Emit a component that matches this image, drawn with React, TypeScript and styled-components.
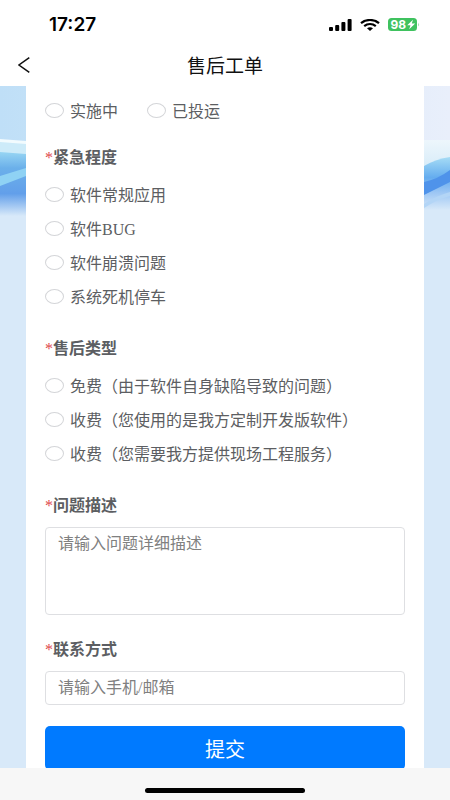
import React from "react";
import styled, { createGlobalStyle } from "styled-components";

const GlobalStyle = createGlobalStyle`
  *, *::before, *::after { box-sizing: border-box; }
  body { margin: 0; background: #fff; }
  button, input, textarea { font: inherit; }
`;

const Page = styled.div`
  display: flex;
  flex-direction: column;
  height: 100vh;
  background: #fff;
  color: #5c5e62;
  font-family: "Liberation Serif", "Noto Sans CJK SC", serif;
  font-size: 16px;
`;

const StatusBar = styled.div`
  display: flex;
  flex: none;
  align-items: center;
  justify-content: space-between;
  height: 48px;
  padding: 1px 30px 0 49px;
`;

const Clock = styled.time`
  color: #000;
  font: 600 19px/24px Inter, sans-serif;
`;

const StatusIcons = styled.div`
  display: flex;
  align-items: center;
  gap: 8px;
`;

const NavBar = styled.header`
  display: grid;
  flex: none;
  grid-template-columns: 48px 1fr 48px;
  align-items: center;
  height: 38px;
  padding-bottom: 4px;
`;

const BackButton = styled.button`
  display: flex;
  align-items: center;
  height: 34px;
  padding: 0 0 0 18px;
  border: 0;
  background: none;
  color: #111;
`;

const Title = styled.h1`
  margin: 0;
  color: #111;
  font: 400 19px/34px "Noto Sans CJK SC", sans-serif;
  text-align: center;
`;

const Content = styled.main`
  position: relative;
  flex: 1;
  min-height: 0;
  padding: 0 26px;
  overflow-y: auto;
  scrollbar-width: none;
  background: #d8e9f9;
`;

const Backdrop = styled.svg`
  position: absolute;
  top: 0;
  left: 0;
  width: 100%;
  height: 130px;
`;

const Card = styled.form`
  position: relative;
  padding: 7px 19px 19px;
  background: #fff;
`;

const Group = styled.fieldset<{ $gap: number }>`
  min-width: 0;
  margin: 0 0 ${(p) => p.$gap}px;
  padding: 0;
  border: 0;
`;

const GroupTitle = styled.legend`
  padding: 2px 0 4px;
  font-weight: 700;
  line-height: 30px;
`;

const Field = styled.div`
  display: flex;
  flex-direction: column;
  gap: 6px;
  margin-bottom: 20px;
`;

const FieldLabel = styled.label`
  font-weight: 700;
  line-height: 30px;
`;

const Required = styled.span`
  color: #e0474c;
  font-weight: 400;
`;

const Options = styled.div<{ $inline?: boolean }>`
  display: flex;
  flex-direction: ${(p) => (p.$inline ? "row" : "column")};
  column-gap: 29px;
`;

const Option = styled.label`
  display: flex;
  align-items: center;
  gap: 6px;
  height: 34px;
  white-space: nowrap;
`;

const Radio = styled.input`
  flex: none;
  width: 19px;
  height: 15px;
  margin: 0;
  border: 1px solid #d4d5d8;
  border-radius: 50%;
  appearance: none;
  background: #fff;
  &:checked { border: 5px solid #007aff; }
`;

const TextArea = styled.textarea`
  display: block;
  width: 100%;
  height: 88px;
  padding: 4px 12px;
  border: 1px solid #dedfe2;
  border-radius: 4px;
  outline: 0;
  resize: none;
  color: #5c5e62;
  line-height: 24px;
  &::placeholder { color: #808080; }
`;

const TextInput = styled.input`
  width: 100%;
  height: 34px;
  padding: 0 12px;
  border: 1px solid #dedfe2;
  border-radius: 4px;
  outline: 0;
  color: #5c5e62;
  &::placeholder { color: #808080; }
`;

const SubmitButton = styled.button`
  display: block;
  width: 100%;
  height: 44px;
  margin-top: 21px;
  border: 0;
  border-radius: 5px;
  background: #007aff;
  color: #fff;
  font-size: 20px;
`;

const HomeBar = styled.footer`
  display: flex;
  flex: none;
  justify-content: center;
  height: 32px;
  padding-top: 20px;
  background: #f7f7f7;
`;

const HomeIndicator = styled.div`
  width: 160px;
  height: 5px;
  border-radius: 3px;
  background: #000;
`;

const urgencies = ["软件常规应用", "软件BUG", "软件崩溃问题", "系统死机停车"];
const serviceTypes = [
  "免费（由于软件自身缺陷导致的问题）",
  "收费（您使用的是我方定制开发版软件）",
  "收费（您需要我方提供现场工程服务）",
];

function Choices({ name, items, inline }: { name: string; items: string[]; inline?: boolean }) {
  return (
    <Options $inline={inline}>
      {items.map((item) => (
        <Option key={item}>
          <Radio type="radio" name={name} value={item} />
          {item}
        </Option>
      ))}
    </Options>
  );
}

function Signal() {
  return (
    <svg width="24" height="12" viewBox="0 0 24 12" aria-label="signal">
      <rect x="1" y="8" width="4" height="4" rx="1" />
      <rect x="7.2" y="6" width="4" height="6" rx="1" />
      <rect x="13.4" y="3" width="4" height="9" rx="1" />
      <rect x="19.6" y="0" width="4" height="12" rx="1" />
    </svg>
  );
}

function Wifi() {
  return (
    <svg width="20" height="12" viewBox="0 0 20 12" fill="none" stroke="#000" strokeWidth="2.2" aria-label="wifi">
      <path d="M1 4.2C6-.1 14-.1 19 4.2" />
      <path d="M4.2 7.1c3.4-2.8 8.2-2.8 11.6 0" />
      <path d="M7 9.2q3-2 6 0L10 12z" fill="#000" stroke="none" />
    </svg>
  );
}

function Battery() {
  return (
    <svg width="32" height="13" viewBox="0 0 32 13" aria-label="battery">
      <rect width="29" height="13" rx="3.5" fill="#3fc25f" />
      <path d="M30.2 4.5q1.6 2 0 4z" fill="#8fdba1" />
      <text x="2.5" y="10.8" fill="#fff" fontFamily="Inter, sans-serif" fontSize="12" fontWeight="700">98</text>
      <path d="M25 1.8l-5.8 5.4h3.3l-1.3 4 6-5.6h-3.4z" fill="#fff" />
    </svg>
  );
}

function Waves() {
  return (
    <Backdrop viewBox="0 0 450 130" preserveAspectRatio="none" aria-hidden="true">
      <defs>
        <linearGradient id="sky" x1="0" x2="1" y1="0" y2="0">
          <stop offset="0" stopColor="#bfdff7" />
          <stop offset="1" stopColor="#e9effb" />
        </linearGradient>
        <linearGradient id="leftWave" x1="0" x2="0" y1="0" y2="1">
          <stop offset="0" stopColor="#97d5f3" />
          <stop offset="0.25" stopColor="#6bb0ea" />
          <stop offset="0.65" stopColor="#629fea" />
          <stop offset="1" stopColor="#d8e9f9" />
        </linearGradient>
        <linearGradient id="rightLight" x1="0" x2="0" y1="0" y2="1">
          <stop offset="0" stopColor="#edf6fc" />
          <stop offset="1" stopColor="#d6ebf8" />
        </linearGradient>
        <linearGradient id="rightWave" x1="0" x2="0" y1="0" y2="1">
          <stop offset="0" stopColor="#a6dcf5" />
          <stop offset="0.35" stopColor="#64acef" />
          <stop offset="0.6" stopColor="#9cc6f4" />
          <stop offset="0.9" stopColor="#d8e9f9" />
          <stop offset="1" stopColor="#d8e9f9" />
        </linearGradient>
      </defs>
      <rect width="450" height="130" fill="url(#sky)" />
      <path d="M0 54l26 2v12H0z" fill="#cdebf9" />
      <path d="M0 53l26 2v3L0 56z" fill="#f2fbfe" />
      <path d="M0 66l26 2v62H0z" fill="url(#leftWave)" />
      <path d="M0 90l26-8v8L0 100z" fill="#8fd2f4" />
      <path d="M424 54h26v20l-26 10z" fill="url(#rightLight)" />
      <path d="M424 80q12-7 26-9v59h-26z" fill="url(#rightWave)" />
      <path d="M424 96q14-3 26-12v12q-12 6-26 13z" fill="#4f93ea" />
      <path d="M424 118q14-9 26-12v4q-12 3-26 12z" fill="#b3d5f6" />
    </Backdrop>
  );
}

export default function App() {
  return (
    <>
      <GlobalStyle />
      <Page>
        <StatusBar>
          <Clock>17:27</Clock>
          <StatusIcons>
            <Signal />
            <Wifi />
            <Battery />
          </StatusIcons>
        </StatusBar>
        <NavBar>
          <BackButton type="button" aria-label="返回">
            <svg width="12" height="16" viewBox="0 0 12 16" fill="none" stroke="currentColor" strokeWidth="1.5">
              <path d="M11.3.6L1 8l10.3 7.4" />
            </svg>
          </BackButton>
          <Title>售后工单</Title>
        </NavBar>
        <Content>
          <Waves />
          <Card onSubmit={(e) => e.preventDefault()}>
            <Group $gap={14} aria-label="项目状态">
              <Choices name="stage" items={["实施中", "已投运"]} inline />
            </Group>
            <Group $gap={19}>
              <GroupTitle><Required>*</Required>紧急程度</GroupTitle>
              <Choices name="urgency" items={urgencies} />
            </Group>
            <Group $gap={21}>
              <GroupTitle><Required>*</Required>售后类型</GroupTitle>
              <Choices name="service" items={serviceTypes} />
            </Group>
            <Field>
              <FieldLabel htmlFor="description"><Required>*</Required>问题描述</FieldLabel>
              <TextArea id="description" placeholder="请输入问题详细描述" />
            </Field>
            <Field>
              <FieldLabel htmlFor="contact"><Required>*</Required>联系方式</FieldLabel>
              <TextInput id="contact" placeholder="请输入手机/邮箱" />
            </Field>
            <SubmitButton type="submit">提交</SubmitButton>
          </Card>
        </Content>
        <HomeBar>
          <HomeIndicator />
        </HomeBar>
      </Page>
    </>
  );
}
